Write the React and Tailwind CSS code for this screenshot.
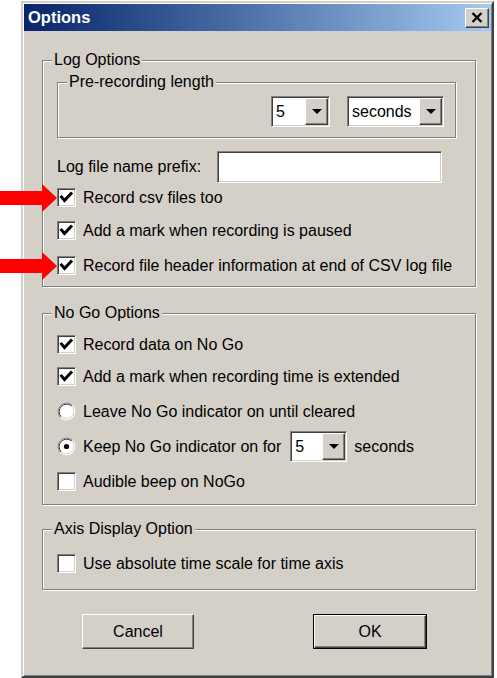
import React from 'react';

const raised =
  'bg-[#d4d0c8] border border-t-white border-l-white border-r-[#404040] border-b-[#404040] shadow-[inset_-1px_-1px_0_#808080]';
const sunken =
  'bg-white border border-t-[#808080] border-l-[#808080] border-r-white border-b-white shadow-[inset_1px_1px_0_#404040,inset_-1px_-1px_0_#d4d0c8]';

function Frame({ label, className, children }) {
  return (
    <div className={`flex flex-col border border-[#808080] shadow-[inset_1px_1px_0_#fff,1px_1px_0_#fff] ${className}`}>
      <span className="self-start -mt-[10px] ml-[9px] px-[2px] bg-[#d4d0c8] leading-[18px] whitespace-nowrap">{label}</span>
      {children}
    </div>
  );
}

function Check({ checked }) {
  return (
    <div className={`w-[19px] h-[19px] shrink-0 ${sunken}`}>
      {checked && (
        <svg width="17" height="17" viewBox="0 0 17 17">
          <polyline points="3.5,8 6.5,11.5 13,4.5" fill="none" stroke="#000" strokeWidth="3" strokeLinecap="square" />
        </svg>
      )}
    </div>
  );
}

function Radio({ checked }) {
  return (
    <svg width="19" height="19" viewBox="0 0 19 19" className="shrink-0">
      <circle cx="9.5" cy="9.5" r="8.5" fill="#fff" />
      <path d="M3.49 15.51 A8.5 8.5 0 0 1 15.51 3.49" fill="none" stroke="#808080" strokeWidth="1" />
      <path d="M15.51 3.49 A8.5 8.5 0 0 1 3.49 15.51" fill="none" stroke="#fff" strokeWidth="1" />
      <path d="M4.2 14.8 A7.5 7.5 0 0 1 14.8 4.2" fill="none" stroke="#404040" strokeWidth="1" />
      <path d="M14.8 4.2 A7.5 7.5 0 0 1 4.2 14.8" fill="none" stroke="#d4d0c8" strokeWidth="1" />
      {checked && <circle cx="9.5" cy="9.5" r="2.6" fill="#000" />}
    </svg>
  );
}

function Combo({ value, className }) {
  return (
    <div className={`h-[31px] flex p-px shrink-0 ${sunken} ${className}`}>
      <span className="flex-1 pl-[3px] leading-[27px]">{value}</span>
      <div className={`w-[23px] h-[27px] flex items-center justify-center ${raised}`}>
        <svg width="10" height="5" viewBox="0 0 10 5">
          <polygon points="0,0 10,0 5,5" fill="#000" />
        </svg>
      </div>
    </div>
  );
}

function Row({ className, children }) {
  return <div className={`ml-[14px] h-[19px] flex items-center gap-[7px] whitespace-nowrap ${className}`}>{children}</div>;
}

function Arrow({ className }) {
  return (
    <svg width="58" height="28" viewBox="0 0 58 28" className={`absolute left-0 ${className}`}>
      <polygon points="0,7 42,7 42,0 57,14 42,28 42,21 0,21" fill="#ff0000" />
    </svg>
  );
}

export default function App() {
  return (
    <div className="relative w-[497px] h-[678px] overflow-hidden bg-white text-black text-[16px] font-['Liberation_Sans',Arial,sans-serif]">
      <div className="ml-[21px] mt-px w-[473px] h-[677px] flex flex-col p-px bg-[#d4d0c8] border-2 border-t-[#d4d0c8] border-l-[#d4d0c8] border-r-[#404040] border-b-[#404040] shadow-[inset_1px_1px_0_#fff,inset_-1px_-1px_0_#808080]">
        {/* title bar */}
        <div className="h-[27px] shrink-0 flex items-center justify-between pl-[4px] pr-[2px] bg-linear-to-r from-[#0a246a] to-[#a6caf0]">
          <span className="text-white font-bold text-[16.5px]">Options</span>
          <div className={`w-[24px] h-[20px] flex items-center justify-center ${raised}`}>
            <svg width="12" height="11" viewBox="0 0 12 11">
              <path d="M1.5 1 L10.5 10 M10.5 1 L1.5 10" stroke="#000" strokeWidth="2.4" />
            </svg>
          </div>
        </div>

        <Frame label="Log Options" className="mt-[29px] ml-[18px] w-[434px] h-[227px] shrink-0">
          <Frame label="Pre-recording length" className="mt-[13px] ml-[14px] w-[399px] h-[56px] shrink-0">
            <div className="mt-[5px] flex justify-end gap-[17px] pr-[11px]">
              <Combo value="5" className="w-[59px]" />
              <Combo value="seconds" className="w-[97px]" />
            </div>
          </Frame>
          <div className="mt-[13px] ml-[14px] h-[32px] flex items-center">
            <span className="w-[160px] whitespace-nowrap">Log file name prefix:</span>
            <div className={`w-[225px] h-[32px] ${sunken}`} />
          </div>
          <Row className="mt-[5px]">
            <Check checked />
            <span>Record csv files too</span>
          </Row>
          <Row className="mt-[14px]">
            <Check checked />
            <span>Add a mark when recording is paused</span>
          </Row>
          <Row className="mt-[16px]">
            <Check checked />
            <span>Record file header information at end of CSV log file</span>
          </Row>
        </Frame>

        <Frame label="No Go Options" className="mt-[26px] ml-[18px] w-[434px] h-[192px] shrink-0">
          <Row className="mt-[13px]">
            <Check checked />
            <span>Record data on No Go</span>
          </Row>
          <Row className="mt-[13px]">
            <Check checked />
            <span>Add a mark when recording time is extended</span>
          </Row>
          <Row className="mt-[16px]">
            <Radio />
            <span>Leave No Go indicator on until cleared</span>
          </Row>
          <Row className="mt-[16px]">
            <Radio checked />
            <span>Keep No Go indicator on for</span>
            <Combo value="5" className="w-[57px] ml-[2px]" />
            <span>seconds</span>
          </Row>
          <Row className="mt-[16px]">
            <Check />
            <span>Audible beep on NoGo</span>
          </Row>
        </Frame>

        <Frame label="Axis Display Option" className="mt-[24px] ml-[18px] w-[434px] h-[61px] shrink-0">
          <Row className="mt-[16px]">
            <Check />
            <span>Use absolute time scale for time axis</span>
          </Row>
        </Frame>

        <div className="mt-[24px] h-[35px] flex shrink-0">
          <button className={`ml-[58px] w-[112px] h-[35px] ${raised}`}>Cancel</button>
          <div className="ml-[119px] w-[114px] h-[35px] border border-black">
            <button className={`w-full h-full ${raised}`}>OK</button>
          </div>
        </div>
      </div>

      <Arrow className="top-[184px]" />
      <Arrow className="top-[252px]" />
    </div>
  );
}
